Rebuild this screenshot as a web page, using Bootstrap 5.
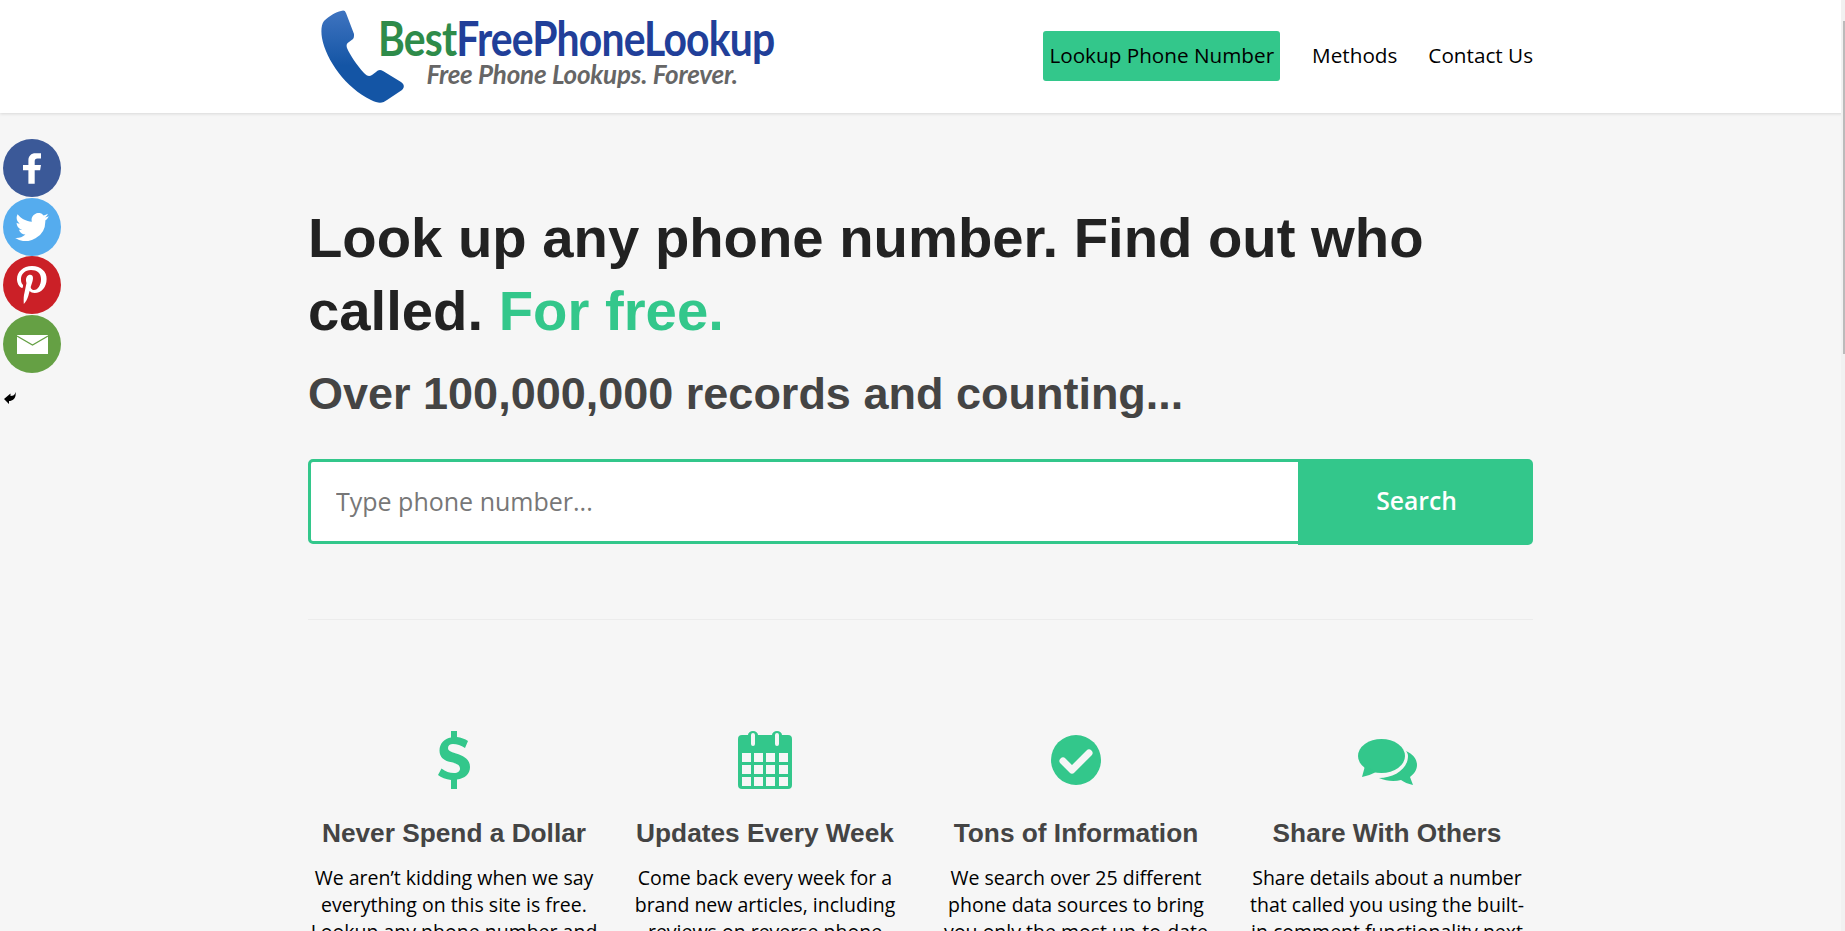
<!DOCTYPE html>
<html lang="en">
<head>
  <meta charset="UTF-8" />
  <title>Best Free Phone Lookup</title>
  <meta name="viewport" content="width=device-width, initial-scale=1" />
  <link href="https://cdn.jsdelivr.net/npm/bootstrap@5.3.0/dist/css/bootstrap.min.css" rel="stylesheet" />
  <style>
    html, body { height: 931px; overflow: hidden; }
    body { background-color: #f6f6f6; font-family: "Open Sans", sans-serif; color: #000; }
    .wrap { width: 1225px; margin-left: 308px; }
    .topbar { height: 113px; background: #fff; box-shadow: 0 1px 3px rgba(0,0,0,.12); }
    .logo-block { padding-top: 10px; padding-left: 13px; }
    .logo-words { margin-left: -27px; padding-top: 4px; width: 400px; }
    .logo-name { font-family: "Lato", sans-serif; font-size: 48px; line-height: 48px; letter-spacing: -1px; font-weight: 700; transform: scaleX(.852); transform-origin: left top; white-space: nowrap; }
    .logo-green { color: #2e8b4a; }
    .logo-blue { color: #213f99; }
    .logo-tag { font-family: "Lato", sans-serif; font-style: italic; font-weight: 700; font-size: 26px; line-height: 26px; color: #666; margin: -1px 0 0 48.5px; letter-spacing: -.2px; white-space: nowrap; }
    .top-menu { gap: 19px; margin-bottom: 2px; }
    .menu-link { color: #000; font-size: 20.7px; text-decoration: none; padding: 0 6px; height: 50px; line-height: 48px; border-radius: 3px; }
    .menu-main { background: #33c78b; margin-right: 7px; }
    .hero-title { font-family: "Liberation Sans", sans-serif; font-weight: 700; font-size: 56.25px; line-height: 73px; color: #222; margin: 0; padding-top: 88px; }
    .hero-green { color: #33c78b; }
    .hero-sub { font-family: "Liberation Sans", sans-serif; font-weight: 700; font-size: 45px; line-height: 56px; color: #444; margin: 19px 0 0; }
    .search-row { margin-top: 37px; height: 86px; }
    .search-input { width: 993px; height: 85px; border: 3px solid #33c78b; border-radius: 5px 0 0 5px; font-size: 25px; padding: 0 24px 2px 25px; background: #fff; box-shadow: none; }
    .search-input::placeholder { color: #777; }
    .search-btn { flex: 1; background: #33c78b; color: #fff; font-weight: 600; font-size: 24.7px; border: 0; border-radius: 0 5px 5px 0; height: 86px; margin-left: -3px; padding: 0 0 2px 2px; }
    .split { border-top: 1px solid #ececec; margin-top: 74px; }
    .perk-row { margin-top: 110px; display: grid; grid-template-columns: repeat(4, 292px); gap: 19px; }
    .perk { text-align: center; }
    .perk-icon { height: 60px; display: flex; align-items: center; justify-content: center; }
    .chat-icon { margin-top: 4px; }
    .perk-title { font-family: "Liberation Sans", sans-serif; font-weight: 700; font-size: 26.25px; line-height: 32px; color: #444; margin: 27px 0 15px; }
    .perk-text { font-size: 19.5px; line-height: 27px; margin: 0; padding: 0 2px; font-weight: 500; }
    .share-bar { position: fixed; left: 3px; top: 139px; width: 58px; gap: .7px; }
    .share-dot { width: 58px; height: 58px; border-radius: 50%; display: flex; align-items: center; justify-content: center; }
    .dot-fb { background: #3b5998; }
    .dot-tw { background: #55acee; }
    .dot-pin { background: #cb2027; }
    .dot-mail { background: #65a044; }
    .hide-arrow { position: fixed; left: 4px; top: 392px; }
    .page-track { position: fixed; right: 0; top: 0; width: 4px; height: 931px; background: #f1f1f1; }
    .page-thumb { position: absolute; right: 0; top: 21px; width: 2px; height: 333px; background: #bbb; }
  </style>
</head>
<body>
  <header class="topbar">
    <div class="wrap d-flex align-items-center justify-content-between h-100">
      <div class="logo-block d-flex align-items-start align-self-start">
        <svg width="84" height="93" viewBox="0 0 84 93">
          <defs><linearGradient id="ph" x1="0" y1="0" x2="0" y2="1"><stop offset="0" stop-color="#3f74c0"/><stop offset=".6" stop-color="#1455a5"/></linearGradient></defs>
          <path d="M20 1C15 2 8 6 3 11C0 15 0 22 1 28C5 50 25 78 50 90C58 94 62 93 66 90L81 80C84 77 83 74 80 72L62 61C59 59 57 60 55 62L51 65C48 67 46 66 43 63C35 54 29 45 26 38C25 35 26 33 28 32L32 29C33 28 33 26 33 24L25 3C24 0 22 0 20 1Z" fill="url(#ph)"/>
        </svg>
        <div class="logo-words">
          <div class="logo-name"><span class="logo-green">Best</span><span class="logo-blue">FreePhoneLookup</span></div>
          <div class="logo-tag">Free Phone Lookups. Forever.</div>
        </div>
      </div>
      <nav class="top-menu d-flex align-items-center">
        <a class="menu-link menu-main" href="#">Lookup Phone Number</a>
        <a class="menu-link" href="#">Methods</a>
        <a class="menu-link pe-0" href="#">Contact Us</a>
      </nav>
    </div>
  </header>

  <main class="wrap">
    <h1 class="hero-title">Look up any phone number. Find out who called. <span class="hero-green">For free.</span></h1>
    <h2 class="hero-sub">Over 100,000,000 records and counting...</h2>
    <form class="search-row d-flex align-items-start">
      <input class="form-control search-input" type="text" placeholder="Type phone number..." />
      <button class="btn search-btn" type="button">Search</button>
    </form>
    <div class="split"></div>

    <div class="perk-row">
      <div class="perk">
        <div class="perk-icon">
          <svg width="32" height="58" viewBox="0 0 32 58"><path fill="#33c78b" d="M13 0h6v6c4 .5 8 2 11 4l-3 7c-4-2.500-8-4-12-4-3 0-5 1.500-5 4 0 2.500 2 3.500 8 5.500 8 2.500 14 6 14 13.500 0 7-5 11.500-13 12.500v9.500h-6v-9c-5-.5-10-2.500-13-5l3.500-6.500c4 3 8 4.500 12.500 4.500 4 0 6-2 6-4.500 0-3-2.500-4.500-8-6.200C6 30 1.500 26.500 1.500 19.500 1.500 12.500 6.500 7.500 13 6.500z"/></svg>
        </div>
        <h3 class="perk-title">Never Spend a Dollar</h3>
        <p class="perk-text">We aren’t kidding when we say everything on this site is free. Lookup any phone number and</p>
      </div>
      <div class="perk">
        <div class="perk-icon">
          <svg width="54" height="58" viewBox="0 0 54 58"><path fill="#33c78b" fill-rule="evenodd" d="M4 4h6V4a5 4 0 0 1 10 0h14a5 4 0 0 1 10 0h6a4 4 0 0 1 4 4v46a4 4 0 0 1-4 4H4a4 4 0 0 1-4-4V8a4 4 0 0 1 4-4zM13 4v9a2 2 0 0 0 4 0V4a2 2 0 0 0-4 0zM37 4v9a2 2 0 0 0 4 0V4a2 2 0 0 0-4 0zM4 22v9h9v-9zM16 22v9h9v-9zM28 22v9h9v-9zM41 22v9h9v-9zM4 34v9h9v-9zM16 34v9h9v-9zM28 34v9h9v-9zM41 34v9h9v-9zM4 46v9h9v-9zM16 46v9h9v-9zM28 46v9h9v-9zM41 46v9h9v-9z"/></svg>
        </div>
        <h3 class="perk-title">Updates Every Week</h3>
        <p class="perk-text">Come back every week for a brand new articles, including reviews on reverse phone</p>
      </div>
      <div class="perk">
        <div class="perk-icon">
          <svg width="50" height="50" viewBox="0 0 50 50"><circle cx="25" cy="25" r="25" fill="#33c78b"/><path d="M12 26l9 9 17-17" fill="none" stroke="#f6f6f6" stroke-width="7" stroke-linecap="round" stroke-linejoin="round"/></svg>
        </div>
        <h3 class="perk-title">Tons of Information</h3>
        <p class="perk-text">We search over 25 different phone data sources to bring you only the most up-to-date</p>
      </div>
      <div class="perk">
        <div class="perk-icon">
          <svg class="chat-icon" width="59" height="46" viewBox="0 0 59 46"><ellipse cx="23.500" cy="17" rx="23.500" ry="17" fill="#33c78b"/><path d="M7 27L4 38c5-1 10-3 14-5z" fill="#33c78b"/><path d="M48 12C55 15 59 20 59 26C59 31 56 35 52 38L55 46C50 45 46 43 43 41C36 43 28 42 21 39C36 39 50 30 50 17C50 15 49 13 48 12Z" fill="#33c78b"/></svg>
        </div>
        <h3 class="perk-title">Share With Others</h3>
        <p class="perk-text">Share details about a number that called you using the built-in comment functionality next</p>
      </div>
    </div>
  </main>

  <div class="share-bar d-flex flex-column">
    <div class="share-dot dot-fb">
      <svg width="18" height="33" viewBox="0 0 20 34"><path fill="#fff" d="M6 34V19H0v-6h6V8c0-5 3-8 8-8h6v6h-4c-2 0-3 1-3 3v4h7l-1 6h-6v15z"/></svg>
    </div>
    <div class="share-dot dot-tw">
      <svg width="34" height="28" viewBox="0 0 24 20"><path fill="#fff" d="M24 2.400c-.9.400-1.800.7-2.800.8 1-.6 1.800-1.600 2.200-2.700-1 .6-2 1-3.100 1.200A4.900 4.900 0 0 0 11.900 6.200C7.800 6 4.200 4 1.700.9.400 3.100 1 6 3.200 7.500c-.8 0-1.600-.2-2.200-.6 0 2.300 1.600 4.400 3.900 4.900-.7.200-1.500.2-2.200.1.600 2 2.500 3.400 4.600 3.400A9.900 9.900 0 0 1 0 17.800 14 14 0 0 0 21.500 5.400c1-.7 1.900-1.700 2.500-3z"/></svg>
    </div>
    <div class="share-dot dot-pin">
      <svg width="30" height="38" viewBox="0 0 30 38"><path fill="#fff" d="M15 0C6 0 0 6 0 13c0 4 2 8 5 9 1 0 1-2 1-3-2-2-2-4-2-6 0-5 4-9 10-9 6 0 10 3 10 9 0 6-3 11-7 11-2 0-4-2-3-4 1-3 2-6 2-8 0-5-7-4-7 2 0 2 .5 3 .5 3L7 29c-.5 3-.3 6-.2 9 2-2 3.500-5 4.500-8l1.300-5c1 1 3 2 5 2 7 0 12-6 12-14C30 6 24 0 15 0z"/></svg>
    </div>
    <div class="share-dot dot-mail">
      <svg width="31" height="19" viewBox="0 0 31 19"><path fill="#fff" d="M0 0h31v19H0z"/><path d="M0 1l15.500 9L31 1" fill="none" stroke="#65a044" stroke-width="1.200"/></svg>
    </div>
  </div>
  <svg class="hide-arrow" width="12" height="12" viewBox="0 0 12 12"><path d="M11.500 0C11 3 9 4 6.500 4V1.500L0 7l5 5V9C9 9 12.500 6 11.500 0z" fill="#000"/></svg>
  <div class="page-track"><div class="page-thumb"></div></div>
</body>
</html>
